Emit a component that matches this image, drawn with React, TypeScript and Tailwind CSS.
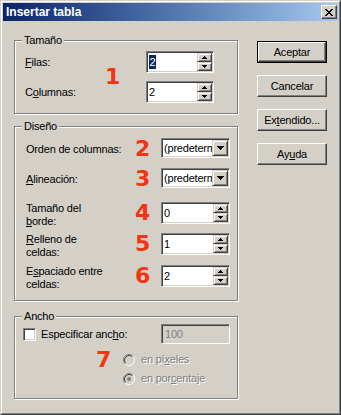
import React from "react";

const sunken =
  "border border-t-[#808080] border-l-[#808080] border-b-white border-r-white shadow-[inset_1px_1px_0_#404040,inset_-1px_-1px_0_#d4d0c8]";
const raisedSmall =
  "border border-t-[#d4d0c8] border-l-[#d4d0c8] border-b-[#404040] border-r-[#404040] shadow-[inset_1px_1px_0_#ffffff,inset_-1px_-1px_0_#808080] bg-[#d4d0c8]";
const pushBtn =
  "border border-t-white border-l-white border-b-[#404040] border-r-[#404040] shadow-[inset_-1px_-1px_0_#808080] bg-[#d4d0c8]";

function UpArrow() {
  return (
    <svg width="5" height="3" shapeRendering="crispEdges" className="block">
      <rect x="2" y="0" width="1" height="1" fill="#000" />
      <rect x="1" y="1" width="3" height="1" fill="#000" />
      <rect x="0" y="2" width="5" height="1" fill="#000" />
    </svg>
  );
}

function DownSmall() {
  return (
    <svg width="5" height="3" shapeRendering="crispEdges" className="block">
      <rect x="0" y="0" width="5" height="1" fill="#000" />
      <rect x="1" y="1" width="3" height="1" fill="#000" />
      <rect x="2" y="2" width="1" height="1" fill="#000" />
    </svg>
  );
}

function DownArrow() {
  return (
    <svg width="7" height="4" shapeRendering="crispEdges" className="block">
      <rect x="0" y="0" width="7" height="1" fill="#000" />
      <rect x="1" y="1" width="5" height="1" fill="#000" />
      <rect x="2" y="2" width="3" height="1" fill="#000" />
      <rect x="3" y="3" width="1" height="1" fill="#000" />
    </svg>
  );
}

function CloseX() {
  const rows: number[][] = [
    [0, 1, 6, 7],
    [1, 2, 5, 6],
    [2, 3, 4, 5],
    [3, 4],
    [2, 3, 4, 5],
    [1, 2, 5, 6],
    [0, 1, 6, 7],
  ];
  return (
    <svg width="8" height="7" shapeRendering="crispEdges" className="block">
      {rows.map((r, y) =>
        r.map((x) => <rect key={`${x}-${y}`} x={x} y={y} width="1" height="1" fill="#000" />)
      )}
    </svg>
  );
}

function Spin({
  value,
  selected,
  w = "w-[68px]",
}: {
  value: string;
  selected?: boolean;
  w?: string;
}) {
  return (
    <div className={`flex h-[22px] ${w} bg-white p-[1px] ${sunken}`}>
      <div className="flex flex-1 items-center pl-[1px]">
        {selected ? (
          <span className="bg-[#0a246a] text-white leading-[14px] px-[0.5px]">{value}</span>
        ) : (
          <span className="leading-[14px]">{value}</span>
        )}
      </div>
      <div className="flex w-[15px] flex-col">
        <div className={`flex h-[9px] items-center justify-center ${raisedSmall}`}>
          <UpArrow />
        </div>
        <div className={`flex h-[9px] items-center justify-center ${raisedSmall}`}>
          <DownSmall />
        </div>
      </div>
    </div>
  );
}

function Combo() {
  return (
    <div className={`flex h-[20px] w-[69px] bg-white p-[1px] ${sunken}`}>
      <div className="flex flex-1 items-center overflow-hidden whitespace-nowrap pl-[1px]">
        (predeterminado)
      </div>
      <div className={`flex h-[16px] w-[16px] items-center justify-center ${raisedSmall}`}>
        <DownArrow />
      </div>
    </div>
  );
}

function Num({ children }: { children: React.ReactNode }) {
  return (
    <span className="font-['DejaVu_Sans',Verdana,sans-serif] text-[22px] font-bold leading-[22px] tracking-normal text-[#f5330f]">
      {children}
    </span>
  );
}

function Group({
  title,
  className,
  children,
}: {
  title: string;
  className: string;
  children: React.ReactNode;
}) {
  return (
    <fieldset
      className={`w-[224px] border border-[#808080] shadow-[inset_1px_1px_0_#ffffff,1px_1px_0_#ffffff] ${className}`}
    >
      <legend className="ml-[7px] bg-[#d4d0c8] px-[2px] leading-[13px]">{title}</legend>
      {children}
    </fieldset>
  );
}

function Radio({ checked }: { checked?: boolean }) {
  return (
    <svg width="12" height="12" className="block">
      <circle cx="6" cy="6" r="4.5" fill="#d4d0c8" />
      <path d="M2.11 9.89 A5.5 5.5 0 0 1 9.89 2.11" fill="none" stroke="#808080" strokeWidth="1" />
      <path d="M9.89 2.11 A5.5 5.5 0 0 1 2.11 9.89" fill="none" stroke="#ffffff" strokeWidth="1" />
      <path d="M2.82 9.18 A4.5 4.5 0 0 1 9.18 2.82" fill="none" stroke="#404040" strokeWidth="1" />
      <path d="M9.18 2.82 A4.5 4.5 0 0 1 2.82 9.18" fill="none" stroke="#d4d0c8" strokeWidth="1" />
      {checked && <circle cx="6" cy="6" r="2" fill="#808080" />}
    </svg>
  );
}

function DRow({
  label,
  num,
  children,
  className,
  two,
}: {
  label: React.ReactNode;
  num: string;
  children: React.ReactNode;
  className: string;
  two?: boolean;
}) {
  return (
    <div className={`grid grid-cols-[109px_26px_69px] ${className}`}>
      <div className={two ? "leading-[13px]" : "flex items-center"}>{label}</div>
      <div className={`flex ${two ? "h-[22px]" : ""} items-center`}>
        <Num>{num}</Num>
      </div>
      <div>{children}</div>
    </div>
  );
}

function Button({
  children,
  def,
}: {
  children: React.ReactNode;
  def?: boolean;
}) {
  if (def) {
    return (
      <div className="h-[22px] w-[70px] border border-black">
        <div className={`flex h-full w-full items-center justify-center ${pushBtn}`}>
          {children}
        </div>
      </div>
    );
  }
  return (
    <div className={`flex h-[22px] w-[70px] items-center justify-center ${pushBtn}`}>
      {children}
    </div>
  );
}

export default function App() {
  return (
    <div className="flex h-[415px] w-[341px] flex-col border border-t-[#d4d0c8] border-l-[#d4d0c8] border-b-[#404040] border-r-[#404040] bg-[#d4d0c8] font-['Liberation_Sans',Arial,sans-serif] text-[11px] tracking-[-0.2px] text-black">
      <div className="flex flex-1 flex-col border border-t-white border-l-white border-b-[#808080] border-r-[#808080] p-[1px]">
        {/* Title bar */}
        <div className="flex h-[18px] items-center bg-linear-to-r from-[#0a246a] to-[#a6caf0] pl-[3px] pr-[1px]">
          <span className="text-[12px] font-bold tracking-normal text-white">Insertar tabla</span>
          <div
            className={`ml-auto flex h-[14px] w-[16px] items-center justify-center ${pushBtn}`}
          >
            <CloseX />
          </div>
        </div>

        {/* Body */}
        <div className="flex flex-1">
          <div className="flex flex-col pl-[11px] pt-[13px]">
            <Group title="Tamaño" className="pb-[10px]">
              <div className="grid grid-cols-[82px_39px_68px] grid-rows-[22px_22px] gap-y-[8px] pl-[10px] pt-[4px]">
                <div className="flex items-center">
                  <span>
                    <u>F</u>ilas:
                  </span>
                </div>
                <div className="row-span-2 flex items-center">
                  <span className="-ml-[2px]">
                    <Num>1</Num>
                  </span>
                </div>
                <Spin value="2" selected />
                <div className="flex items-center">
                  <span>
                    C<u>o</u>lumnas:
                  </span>
                </div>
                <Spin value="2" />
              </div>
            </Group>

            <Group title="Diseño" className="mt-[6px] pb-[9px]">
              <div className="flex flex-col pl-[11px] pt-[5px]">
                <DRow label="Orden de columnas:" num="2" className="h-[20px]">
                  <Combo />
                </DRow>
                <DRow
                  label={
                    <span>
                      <u>A</u>lineación:
                    </span>
                  }
                  num="3"
                  className="mt-[10px] h-[20px]"
                >
                  <Combo />
                </DRow>
                <DRow
                  two
                  label={
                    <>
                      Tamaño del
                      <br />
                      <u>b</u>orde:
                    </>
                  }
                  num="4"
                  className="mt-[14px] h-[26px]"
                >
                  <Spin value="0" w="w-[69px]" />
                </DRow>
                <DRow
                  two
                  label={
                    <>
                      <u>R</u>elleno de
                      <br />
                      celdas:
                    </>
                  }
                  num="5"
                  className="mt-[5px] h-[26px]"
                >
                  <Spin value="1" w="w-[69px]" />
                </DRow>
                <DRow
                  two
                  label={
                    <>
                      E<u>s</u>paciado entre
                      <br />
                      celdas:
                    </>
                  }
                  num="6"
                  className="mt-[6px] h-[26px]"
                >
                  <Spin value="2" w="w-[69px]" />
                </DRow>
              </div>
            </Group>

            <Group title="Ancho" className="mt-[9px] pb-[10px]">
              <div className="flex flex-col pl-[8px] pr-[7px] pt-[1px]">
                <div className="flex h-[20px] items-center">
                  <div className={`h-[13px] w-[13px] bg-white ${sunken}`} />
                  <span className="ml-[5px]">
                    Especificar anc<u>h</u>o:
                  </span>
                  <div
                    className={`ml-auto flex h-[20px] w-[69px] items-center bg-[#d4d0c8] pl-[3px] text-[#808080] ${sunken}`}
                  >
                    100
                  </div>
                </div>
                <div className="mt-[6px] flex">
                  <div className="flex h-[19px] w-[100px] items-center pl-[73px]">
                    <Num>7</Num>
                  </div>
                  <div className="flex flex-col text-[#808080] [text-shadow:1px_1px_0_#ffffff]">
                    <div className="flex h-[19px] items-center gap-[6px]">
                      <Radio />
                      <span>
                        en pí<u>x</u>eles
                      </span>
                    </div>
                    <div className="flex h-[19px] items-center gap-[6px]">
                      <Radio checked />
                      <span>
                        en por<u>c</u>entaje
                      </span>
                    </div>
                  </div>
                </div>
              </div>
            </Group>
          </div>

          <div className="ml-[19px] flex flex-col gap-[12px] pt-[20px]">
            <Button def>Aceptar</Button>
            <Button>Cancelar</Button>
            <Button>
              <span>
                Ex<u>t</u>endido...
              </span>
            </Button>
            <Button>
              <span>
                Ay<u>u</u>da
              </span>
            </Button>
          </div>
        </div>
      </div>
    </div>
  );
}
